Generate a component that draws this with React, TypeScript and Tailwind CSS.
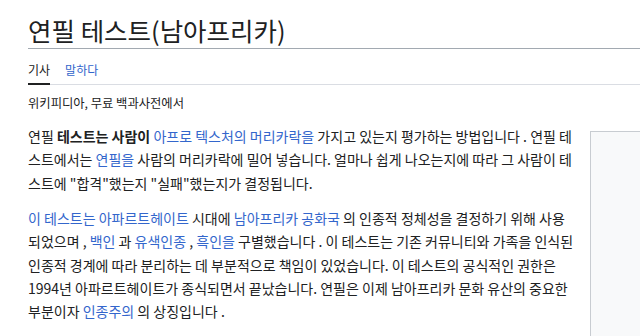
const link = 'text-[#3366cc]'

export default function App() {
    return (
        <div className="w-[640px] h-[336px] overflow-hidden bg-white pl-7 text-[#202122] font-['Noto_Sans_CJK_KR','Noto_Sans',sans-serif]">
            <h1 className="pt-[13px] pb-[1px] text-[25.5px] leading-[34px] font-normal border-b border-[#a2a9b1] whitespace-nowrap">
                연필 테스트(남아프리카)
            </h1>

            <nav className="flex gap-[15px] mt-[11px] text-[12px] leading-[20px] border-b border-[#dadde3]">
                <span className="border-b-2 border-[#202122] -mb-px pb-[3px]">기사</span>
                <span className={link}>말하다</span>
            </nav>

            <div className="mt-[9px] text-[12.3px] leading-[18px]">위키피디아, 무료 백과사전에서</div>

            <div className="flex gap-[14px] mt-[13px]">
                <div className="w-[548px] shrink-0 text-[14px] leading-[23.4px]">
                    <p className="mb-[11.6px]">
                        연필 <b className="font-bold">테스트는 사람이</b> <a className={link}>아프로 텍스처의 머리카락을</a> 가지고 있는지 평가하는 방법입니다 . 연필 테스트에서는 <a className={link}>연필을</a> 사람의 머리카락에 밀어 넣습니다. 얼마나 쉽게 나오는지에 따라 그 사람이 테스트에 "합격"했는지 "실패"했는지가 결정됩니다.
                    </p>
                    <p>
                        <a className={link}>이 테스트는 아파르트헤이트</a> 시대에 <a className={link}>남아프리카 공화국</a> 의 인종적 정체성을 결정하기 위해 사용되었으며 , <a className={link}>백인</a> 과 <a className={link}>유색인종</a> , <a className={link}>흑인을</a> 구별했습니다 . 이 테스트는 기존 커뮤니티와 가족을 인식된 인종적 경계에 따라 분리하는 데 부분적으로 책임이 있었습니다. 이 테스트의 공식적인 권한은 1994년 아파르트헤이트가 종식되면서 끝났습니다. 연필은 이제 남아프리카 문화 유산의 중요한 부분이자 <a className={link}>인종주의</a> 의 상징입니다 .
                    </p>
                </div>
                <aside className="mt-[6px] w-[80px] h-[240px] shrink-0 border border-[#c8ccd1] bg-[#f8f9fa]" />
            </div>
        </div>
    )
}
